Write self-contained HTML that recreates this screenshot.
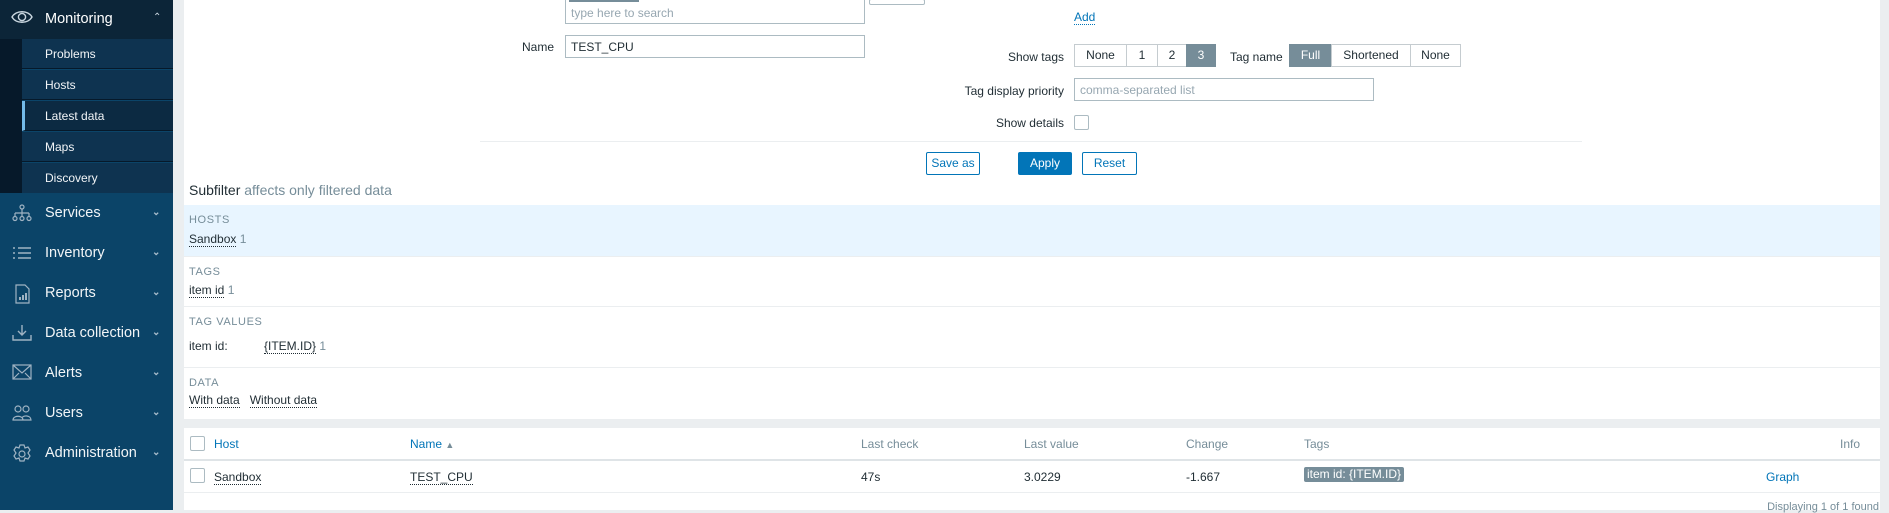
<!DOCTYPE html>
<html><head><meta charset="utf-8"><style>
*{box-sizing:border-box;margin:0;padding:0}
body{width:1889px;height:510px;overflow:hidden;background:#ebeef0;font-family:"Liberation Sans",sans-serif;font-size:12px;color:#1f2c33;position:relative}
.a{position:absolute}
#sb{left:0;top:0;width:173px;height:510px;background:#0b4468}
.mh{left:0;top:0;width:173px;height:39px;background:#0c2538;color:#fff;font-size:14.5px}
.strip{left:0;top:39px;width:22px;height:154px;background:#06192a}
.sub{left:22px;width:151px;height:30px;background:#0e3350;color:#f2f5f7;font-size:12px;line-height:30px;padding-left:23px;border-bottom:1px solid #06192a}
.mi{left:0;width:173px;height:40px;color:#f2f5f7;font-size:14.5px;line-height:40px}
.mi span{position:absolute;left:45px}
.chev{position:absolute;left:152px;top:0;color:#a8bccb;font-size:10px}
.ic{position:absolute;left:12px;top:11px}
#main{left:184px;top:0;width:1696px;height:419px;background:#fff}
.lbl{color:#1f2c33;text-align:right}
.inp{border:1px solid #acbbc2;background:#fff;height:23px;padding:4px 5px;color:#1f2c33}
.ph{color:#97a7b1}
.seg{top:44px;height:23px;border:1px solid #c5ccd0;background:#fff;text-align:center;line-height:21px}
.segon{background:#768d99;color:#fff;border-color:#768d99}
.btn{top:152px;height:23px;border:1px solid #0275b8;color:#0275b8;background:#fff;text-align:center;line-height:21px;border-radius:2px}
.sec{left:184px;width:1696px;border-bottom:1px solid #ebeef0;padding-left:5px}
.h{color:#768d99;font-size:11px;letter-spacing:.6px;position:absolute;left:5px;top:9px}
.dot{border-bottom:1px dotted #1f2c33}
.cnt{color:#768d99}
.cb{width:15px;height:15px;border:1px solid #acbbc2;border-radius:2px;background:#fff}
.th{color:#768d99;top:437px}
.thl{color:#0275b8;top:437px}
.td{top:470px}
</style></head><body>
<div id="sb" class="a"></div>
<div class="a mh">
<svg class="a" style="left:11px;top:9px" width="22" height="16" viewBox="0 0 22 16"><path d="M1 8C5 1 17 1 21 8C17 15 5 15 1 8Z" fill="none" stroke="#c9d6df" stroke-width="1.4"/><circle cx="11" cy="8" r="3.6" fill="none" stroke="#c9d6df" stroke-width="1.4"/></svg>
<span class="a" style="left:45px;top:11px">Monitoring</span><span class="a" style="left:153px;top:12px;font-size:10px;color:#c9d6df">&#8963;</span></div>
<div class="a strip"></div>
<div class="a sub" style="top:39px">Problems</div>
<div class="a sub" style="top:70px">Hosts</div>
<div class="a sub" style="top:101px;background:#0c2a42;border-left:3px solid #74bbe9;padding-left:20px">Latest data</div>
<div class="a sub" style="top:132px">Maps</div>
<div class="a sub" style="top:163px;border-bottom:none">Discovery</div>

<div class="a mi" style="top:193px"><svg class="ic" width="20" height="18" viewBox="0 0 20 18" fill="none" stroke="#9fb3c3" stroke-width="1.2"><circle cx="10" cy="3" r="2"/><path d="M10 5v4M3 9h14M3 9v3M10 9v3M17 9v3"/><circle cx="3" cy="14.5" r="2"/><circle cx="10" cy="14.5" r="2"/><circle cx="17" cy="14.5" r="2"/></svg><span>Services</span><b class="chev">&#8964;</b></div>
<div class="a mi" style="top:233px"><svg class="ic" width="20" height="18" viewBox="0 0 20 18" fill="none" stroke="#9fb3c3" stroke-width="1.6"><path d="M1 4h2M6 4h13M1 9h2M6 9h13M1 14h2M6 14h13"/></svg><span>Inventory</span><b class="chev">&#8964;</b></div>
<div class="a mi" style="top:273px"><svg class="ic" width="20" height="20" viewBox="0 0 20 20" fill="none" stroke="#9fb3c3" stroke-width="1.2"><path d="M4 1h9l4 4v14H4z"/><path d="M8 16v-3M11 16v-5M14 16v-7" stroke-width="2"/></svg><span>Reports</span><b class="chev">&#8964;</b></div>
<div class="a mi" style="top:313px"><svg class="ic" width="20" height="18" viewBox="0 0 20 18" fill="none" stroke="#9fb3c3" stroke-width="1.4"><path d="M10 1v10M6 7l4 4 4-4M1 11v5h18v-5"/></svg><span>Data collection</span><b class="chev">&#8964;</b></div>
<div class="a mi" style="top:353px"><svg class="ic" width="20" height="16" viewBox="0 0 20 16" fill="none" stroke="#9fb3c3" stroke-width="1.2"><rect x="1" y="1" width="18" height="14"/><path d="M1 1l9 8 9-8M1 15l6-6M19 15l-6-6"/></svg><span>Alerts</span><b class="chev">&#8964;</b></div>
<div class="a mi" style="top:393px"><svg class="ic" width="20" height="18" viewBox="0 0 20 18" fill="none" stroke="#9fb3c3" stroke-width="1.2"><circle cx="6" cy="5" r="3"/><circle cx="14" cy="5" r="3"/><path d="M1 16c0-5 10-5 10 0zM9 16h10c0-5-8-5-9-2"/></svg><span>Users</span><b class="chev">&#8964;</b></div>
<div class="a mi" style="top:433px"><svg class="ic" width="20" height="20" viewBox="0 0 20 20" fill="none" stroke="#9fb3c3" stroke-width="1.2"><path d="M8 1h4l1 3 3-1 2 3-2 3 2 3-2 3-3-1-1 3H8l-1-3-3 1-2-3 2-3-2-3 2-3 3 1z"/><circle cx="10" cy="10" r="3"/></svg><span>Administration</span><b class="chev">&#8964;</b></div>

<div id="main" class="a"></div>
<div class="a inp" style="left:565px;top:-1px;width:300px;height:25px;padding-top:6px"><span class="ph">type here to search</span></div>
<div class="a" style="left:569px;top:-1px;width:70px;height:3px;background:#768d99"></div>
<div class="a" style="left:869px;top:-1px;width:56px;height:6px;border:1px solid #acbbc2;border-radius:2px"></div>
<div class="a" style="left:1074px;top:10px;color:#0275b8;border-bottom:1px dotted #0275b8">Add</div>
<div class="a lbl" style="left:500px;top:40px;width:54px">Name</div>
<div class="a inp" style="left:565px;top:35px;width:300px">TEST_CPU</div>
<div class="a lbl" style="left:960px;top:50px;width:104px">Show tags</div>
<div class="a seg" style="left:1074px;width:53px">None</div>
<div class="a seg" style="left:1126px;width:32px">1</div>
<div class="a seg" style="left:1157px;width:30px">2</div>
<div class="a seg segon" style="left:1186px;width:30px">3</div>
<div class="a" style="left:1230px;top:50px">Tag name</div>
<div class="a seg segon" style="left:1289px;width:43px">Full</div>
<div class="a seg" style="left:1331px;width:80px">Shortened</div>
<div class="a seg" style="left:1410px;width:51px">None</div>
<div class="a lbl" style="left:900px;top:84px;width:164px">Tag display priority</div>
<div class="a inp" style="left:1074px;top:78px;width:300px"><span class="ph">comma-separated list</span></div>
<div class="a lbl" style="left:900px;top:116px;width:164px">Show details</div>
<div class="a cb" style="left:1074px;top:115px"></div>
<div class="a" style="left:480px;top:141px;width:1102px;height:1px;background:#ebeef0"></div>
<div class="a btn" style="left:926px;width:54px">Save as</div>
<div class="a btn" style="left:1018px;width:54px;background:#0275b8;color:#fff">Apply</div>
<div class="a btn" style="left:1082px;width:55px">Reset</div>

<div class="a" style="left:189px;top:182px;font-size:14px">Subfilter <span style="color:#768d99">affects only filtered data</span></div>
<div class="a sec" style="top:205px;height:52px;background:#e8f5ff"><span class="h">HOSTS</span><span class="a" style="left:5px;top:27px"><span class="dot">Sandbox</span> <span class="cnt">1</span></span></div>
<div class="a sec" style="top:257px;height:50px"><span class="h">TAGS</span><span class="a" style="left:5px;top:26px"><span class="dot">item id</span> <span class="cnt">1</span></span></div>
<div class="a sec" style="top:307px;height:61px"><span class="h">TAG VALUES</span><span class="a" style="left:5px;top:32px">item id:</span><span class="a" style="left:80px;top:32px"><span class="dot">{ITEM.ID}</span> <span class="cnt">1</span></span></div>
<div class="a sec" style="top:368px;height:51px;border-bottom:none"><span class="h">DATA</span><span class="a" style="left:5px;top:25px"><span class="dot">With data</span>&nbsp;&nbsp;&nbsp;<span class="dot">Without data</span></span></div>

<div class="a" style="left:184px;top:428px;width:1696px;height:82px;background:#fff"></div>
<div class="a" style="left:184px;top:459px;width:1696px;height:2px;background:#dfe4e7"></div>
<div class="a" style="left:184px;top:492px;width:1696px;height:1px;background:#ebeef0"></div>
<div class="a cb" style="left:190px;top:436px"></div>
<div class="a thl" style="left:214px">Host</div>
<div class="a thl" style="left:410px">Name <span style="color:#768d99;font-size:9px">&#9650;</span></div>
<div class="a th" style="left:861px">Last check</div>
<div class="a th" style="left:1024px">Last value</div>
<div class="a th" style="left:1186px">Change</div>
<div class="a th" style="left:1304px">Tags</div>
<div class="a th" style="left:1840px">Info</div>
<div class="a cb" style="left:190px;top:468px"></div>
<div class="a td dot" style="left:214px">Sandbox</div>
<div class="a td dot" style="left:410px">TEST_CPU</div>
<div class="a td" style="left:861px">47s</div>
<div class="a td" style="left:1024px">3.0229</div>
<div class="a td" style="left:1186px">-1.667</div>
<div class="a" style="left:1304px;top:467px;height:15px;padding:0 3px;background:#768d99;color:#fff;border-radius:2px;line-height:15px">item id: {ITEM.ID}</div>
<div class="a td" style="left:1766px;color:#0275b8">Graph</div>
<div class="a" style="left:1740px;top:501px;width:139px;text-align:right;color:#768d99;font-size:11px">Displaying 1 of 1 found</div>
</body></html>
